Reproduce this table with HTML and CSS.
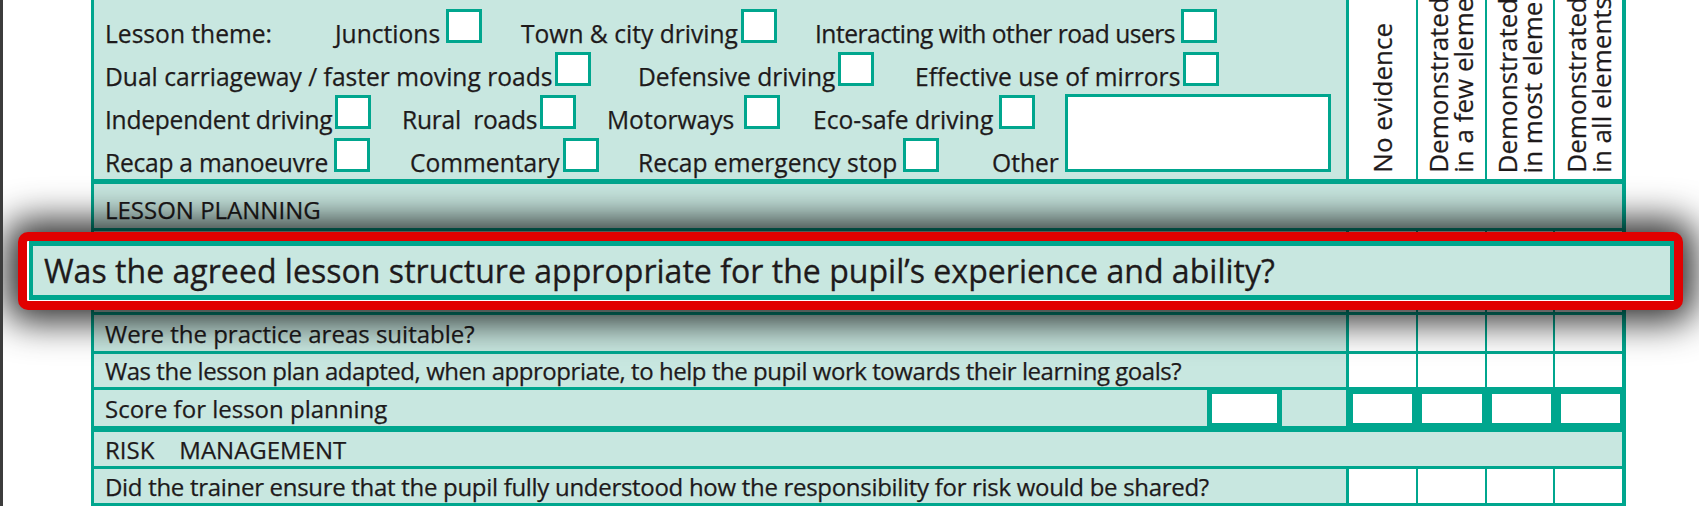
FILE: index.html
```html
<!DOCTYPE html>
<html lang="en">
<head>
<meta charset="utf-8">
<title>Lesson assessment form</title>
<link rel="stylesheet" href="styles.css">
</head>
<body>
<div class="page">
  <div class="form">
    <div class="theme-block">
      <div class="themes">
        <div class="trow">
          <span class="item w230"><span class="lbl">Lesson theme:</span></span>
          <span class="item w186"><span class="lbl">Junctions</span><i class="box box-wide"></i></span>
          <span class="item w294"><span class="lbl">Town &amp; city driving</span><i class="box"></i></span>
          <span class="item"><span class="lbl narrow">Interacting with other road users</span><i class="box box-wide"></i></span>
        </div>
        <div class="trow">
          <span class="item w533"><span class="lbl">Dual carriageway / faster moving roads</span><i class="box"></i></span>
          <span class="item w277"><span class="lbl">Defensive driving</span><i class="box"></i></span>
          <span class="item"><span class="lbl">Effective use of mirrors</span><i class="box"></i></span>
        </div>
        <div class="trow">
          <span class="item w297"><span class="lbl slim">Independent driving</span><i class="box"></i></span>
          <span class="item w205"><span class="lbl slim">Rural  roads</span><i class="box"></i></span>
          <span class="item w206"><span class="lbl">Motorways </span><i class="box"></i></span>
          <span class="item"><span class="lbl">Eco-safe driving</span><i class="box box-wide"></i></span>
        </div>
        <div class="trow">
          <span class="item w305"><span class="lbl slim">Recap a manoeuvre</span><i class="box box-wide"></i></span>
          <span class="item w228"><span class="lbl">Commentary</span><i class="box"></i></span>
          <span class="item w354"><span class="lbl">Recap emergency stop</span><i class="box box-wide"></i></span>
          <span class="item"><span class="lbl">Other</span><i class="box box-other"></i></span>
        </div>
      </div>
      <div class="heads">
        <div class="hcol"><span class="vt">No evidence</span></div>
        <div class="hcol"><span class="vt">Demonstrated<br>in a few elements</span></div>
        <div class="hcol"><span class="vt">Demonstrated<br>in most elements</span></div>
        <div class="hcol"><span class="vt">Demonstrated<br>in all elements</span></div>
      </div>
    </div>

    <div class="row section lp">LESSON PLANNING</div>

    <div class="row q hidden-q">
      <div class="qtext"></div>
      <div class="cells"><span></span><span></span><span></span><span></span></div>
    </div>

    <div class="row q h36">
      <div class="qtext">Were the practice areas suitable?</div>
      <div class="cells"><span></span><span></span><span></span><span></span></div>
    </div>

    <div class="row q h33">
      <div class="qtext tight">Was the lesson plan adapted, when appropriate, to help the pupil work towards their learning goals?</div>
      <div class="cells"><span></span><span></span><span></span><span></span></div>
    </div>

    <div class="row score">
      <div class="score-label">Score for lesson planning</div>
      <div class="sbox"></div>
      <div class="score-blank"></div>
      <div class="sboxes"><span></span><span></span><span></span><span></span></div>
    </div>

    <div class="row section risk">RISK    MANAGEMENT</div>

    <div class="row q h34">
      <div class="qtext snug">Did the trainer ensure that the pupil fully understood how the responsibility for risk would be shared?</div>
      <div class="cells"><span></span><span></span><span></span><span></span></div>
    </div>
  </div>

  <div class="magnifier">
    <div class="mag-inner">Was the agreed lesson structure appropriate for the pupil’s experience and ability?</div>
  </div>
</div>
</body>
</html>
```

FILE: styles.css
```css
html, body {
  margin: 0;
  padding: 0;
  background: #ffffff;
}

body {
  font-family: "Open Sans", "Noto Sans", sans-serif;
  color: #1e1a1b;
  font-size: 24px;
  font-weight: 500;
  -webkit-text-stroke: 0.25px #1e1a1b;
}

.page {
  position: relative;
  height: 506px;
  border-left: 3px solid #3c3c3c;
  padding-left: 88px;
  overflow: hidden;
}

.form {
  width: 1535px;
  box-sizing: border-box;
  background: #00a68e;
  padding: 0 4px 3px 3px;
  display: flex;
  flex-direction: column;
  gap: 3px;
}

/* ---------- lesson theme block ---------- */
.theme-block {
  display: flex;
  height: 179px;
  margin-bottom: 2px;
}

.themes {
  width: 1252px;
  flex: none;
  box-sizing: border-box;
  background: #c8e7e0;
  padding: 9px 0 0 11px;
  font-size: 24.6px;
}

.trow {
  display: flex;
  align-items: baseline;
  height: 43px;
}

.item {
  display: flex;
  align-items: baseline;
  flex: none;
}

.lbl {
  white-space: pre;
}

.lbl.narrow {
  letter-spacing: -0.5px;
}

.lbl.slim {
  letter-spacing: -0.25px;
}

.w186 { width: 186px; }
.w205 { width: 205px; }
.w206 { width: 206px; }
.w228 { width: 228px; }
.w230 { width: 230px; }
.w277 { width: 277px; }
.w294 { width: 294px; }
.w297 { width: 297px; }
.w305 { width: 305px; }
.w354 { width: 354px; }
.w533 { width: 533px; }

.box {
  display: block;
  flex: none;
  width: 36px;
  height: 34px;
  box-sizing: border-box;
  border: 3px solid #00a68e;
  background: #ffffff;
  margin-left: 3px;
}

.box-wide {
  margin-left: 6px;
}

.box-other {
  width: 266px;
  height: 78px;
  margin-top: -44px;
  margin-left: 6px;
}

.heads {
  flex: 1;
  display: flex;
  gap: 2px;
  margin-left: 3px;
}

.hcol {
  flex: 1;
  background: #ffffff;
  display: flex;
  justify-content: center;
  align-items: flex-end;
  padding-bottom: 6px;
  box-sizing: border-box;
}

.vt {
  writing-mode: vertical-rl;
  transform: rotate(180deg);
  white-space: nowrap;
  line-height: 25px;
  font-size: 26px;
}

/* ---------- rows ---------- */
.row {
  display: flex;
}

.section {
  background: #c8e7e0;
  align-items: center;
  padding-left: 11px;
  white-space: pre;
}

.lp {
  height: 44px;
  padding-top: 6px;
  box-sizing: border-box;
}

.risk {
  height: 34px;
  margin-top: 3px;
}

.q .qtext {
  width: 1252px;
  flex: none;
  box-sizing: border-box;
  background: #c8e7e0;
  padding-left: 11px;
  display: flex;
  align-items: center;
  white-space: nowrap;
  overflow: hidden;
}

.q .tight {
  letter-spacing: -0.45px;
}

.q .snug {
  letter-spacing: -0.3px;
}

.cells {
  flex: 1;
  display: flex;
  gap: 2px;
  margin-left: 3px;
}

.cells span {
  flex: 1;
  background: #ffffff;
}

.hidden-q { height: 81px; }
.h36 { height: 36px; }
.h33 { height: 33px; }
.h34 { height: 34px; }

/* score row */
.score {
  height: 36px;
}

.score-label {
  width: 1113px;
  flex: none;
  box-sizing: border-box;
  background: #c8e7e0;
  padding-left: 11px;
  display: flex;
  align-items: center;
}

.sbox {
  width: 65px;
  flex: none;
  margin: 4px 5px 3px;
  background: #ffffff;
}

.score-blank {
  width: 64px;
  flex: none;
  background: #c8e7e0;
}

.sboxes {
  flex: 1;
  display: flex;
  gap: 10px;
  padding: 4px 2px 3px 7px;
}

.sboxes span {
  flex: 1;
  background: #ffffff;
}

/* ---------- magnified overlay ---------- */
.magnifier {
  position: absolute;
  left: 15px;
  top: 232px;
  width: 1665px;
  height: 78px;
  box-sizing: border-box;
  border: 9px solid #e10000;
  border-radius: 10px;
  background: #ffffff;
  box-shadow: 0 0 36px 12px rgba(0, 0, 0, 0.82);
  display: flex;
}

.mag-inner {
  flex: 1;
  margin: 0 0 1px 2px;
  border: 4px solid #00a68e;
  border-top-width: 5px;
  border-bottom-width: 5px;
  background: #c8e7e0;
  display: flex;
  align-items: center;
  padding-left: 11px;
  font-size: 32.1px;
  white-space: nowrap;
  -webkit-text-stroke: 0.3px #1e1a1b;
}
```
